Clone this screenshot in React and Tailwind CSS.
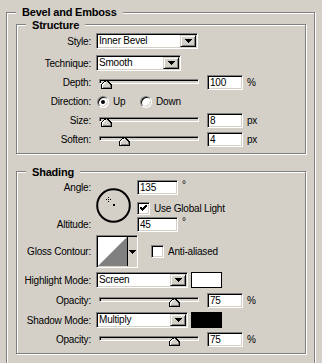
import React from 'react'

const sunken =
  'border border-t-[#808080] border-l-[#808080] border-b-white border-r-white shadow-[inset_1px_1px_0_#000,inset_-1px_-1px_0_#d4d0c8]'
const raised =
  'border border-t-[#d4d0c8] border-l-[#d4d0c8] border-b-black border-r-black shadow-[inset_1px_1px_0_#fff,inset_-1px_-1px_0_#808080] bg-[#d4d0c8]'

function Arrow() {
  return (
    <svg width="7" height="4" shapeRendering="crispEdges">
      <polygon points="0,0 7,0 3.5,4" fill="#000" />
    </svg>
  )
}

function Label({ children }) {
  return <div className="w-[74px] shrink-0 text-right pr-0">{children}</div>
}

function Select({ value, w }) {
  return (
    <div className={`${sunken} ${w} h-[16px] bg-white flex items-center p-[1px]`}>
      <span className="flex-1 pl-[1px] leading-none">{value}</span>
      <div className={`${raised} w-[16px] h-full flex items-center justify-center`}>
        <Arrow />
      </div>
    </div>
  )
}

function Field({ value, w = 'w-[36px]' }) {
  return (
    <div className={`${sunken} ${w} h-[15px] bg-white flex items-center pl-[2px] leading-none`}>
      {value}
    </div>
  )
}

function Thumb() {
  return (
    <svg width="11" height="9" shapeRendering="crispEdges">
      <polygon points="0.5,8.5 0.5,4.5 5,0.5 6,0.5 10.5,5 10.5,8.5" fill="#d4d0c8" stroke="#000" />
      <polyline points="1.5,7.5 1.5,5 5.2,1.6" fill="none" stroke="#fff" />
      <polyline points="1.5,7.5 9.5,7.5 9.5,5.4" fill="none" stroke="#808080" />
    </svg>
  )
}

function Slider({ pos }) {
  return (
    <div className="relative ml-[3px] w-[100px] h-[15px] shrink-0">
      <div className="mt-[4px] h-[5px] w-full border border-t-[#808080] border-l-[#808080] border-b-white border-r-white shadow-[inset_1px_1px_0_#000] bg-[#d4d0c8]" />
      <div className="absolute top-[5px]" style={{ left: pos }}>
        <Thumb />
      </div>
    </div>
  )
}

function SliderRow({ label, pos, value, unit, className = '' }) {
  return (
    <div className={`flex items-center h-[15px] ${className}`}>
      <Label>{label}</Label>
      <div className="ml-[5px] flex items-center">
        <Slider pos={pos} />
        <div className="ml-[8px]">
          <Field value={value} />
        </div>
        <span className="ml-[4px]">{unit}</span>
      </div>
    </div>
  )
}

function Radio({ checked }) {
  return (
    <div className="w-[12px] h-[12px] rounded-full border border-t-[#808080] border-l-[#808080] border-b-white border-r-white shadow-[inset_1px_1px_0_#000,inset_-1px_-1px_0_#d4d0c8] bg-white flex items-center justify-center">
      {checked && <div className="w-[4px] h-[4px] rounded-full bg-black" />}
    </div>
  )
}

function Checkbox({ checked }) {
  return (
    <div className={`${sunken} w-[13px] h-[13px] bg-white flex items-center justify-center shrink-0`}>
      {checked && (
        <svg width="9" height="9" shapeRendering="crispEdges">
          <polyline points="1.5,3.5 3.5,5.5 7.5,1.5" fill="none" stroke="#000" strokeWidth="2" />
        </svg>
      )}
    </div>
  )
}

function Group({ title, titleTop, className = '', children }) {
  return (
    <div className={`relative border border-[#808080] shadow-[1px_1px_0_#fff,inset_1px_1px_0_#fff] ${className}`}>
      <span className={`absolute left-[9px] ${titleTop} bg-[#d4d0c8] px-[6px] text-[11px] leading-[13px] font-bold`}>
        {title}
      </span>
      {children}
    </div>
  )
}

export default function App() {
  return (
    <div className="w-[322px] h-[363px] overflow-hidden bg-[#d4d0c8] pl-[6px] pt-[12px] text-black text-[10px] tracking-[-0.2px] font-['Liberation_Sans',Arial,sans-serif]">
      <Group title="Bevel and Emboss" titleTop="-top-[7px]" className="w-[309px]">
        {/* Structure */}
        <Group title="Structure" titleTop="-top-[6px]" className="mt-[11px] ml-[9px] mr-[8px] pt-[8px] pb-[6px]">
          <div className="flex items-center h-[16px]">
            <Label>Style:</Label>
            <div className="ml-[5px]">
              <Select value="Inner Bevel" w="w-[102px]" />
            </div>
          </div>
          <div className="flex items-center h-[16px] mt-[6px]">
            <Label>Technique:</Label>
            <div className="ml-[5px]">
              <Select value="Smooth" w="w-[85px]" />
            </div>
          </div>
          <SliderRow label="Depth:" pos={2} value="100" unit="%" className="mt-[4px]" />
          <div className="flex items-center h-[15px] mt-[4px]">
            <Label>Direction:</Label>
            <div className="ml-[6px] flex items-center">
              <div className="flex items-center w-[43px]">
                <Radio checked />
                <span className="ml-[4px]">Up</span>
              </div>
              <div className="flex items-center">
                <Radio />
                <span className="ml-[4px]">Down</span>
              </div>
            </div>
          </div>
          <SliderRow label="Size:" pos={2} value="8" unit="px" className="mt-[4px]" />
          <SliderRow label="Soften:" pos={20} value="4" unit="px" className="mt-[4px]" />
        </Group>

        {/* Shading */}
        <Group title="Shading" titleTop="-top-[6px]" className="mt-[17px] ml-[9px] mr-[8px] mb-[12px] pt-[8px] pb-[6px]">
          <div className="flex">
            <div className="w-[74px] shrink-0 flex flex-col justify-between text-right">
              <div className="h-[15px] flex items-center justify-end">Angle:</div>
              <div className="h-[15px] flex items-center justify-end">Altitude:</div>
            </div>
            <svg width="35" height="35" className="ml-[5px] mt-[8px] shrink-0" shapeRendering="crispEdges">
              <circle cx="17.5" cy="17.5" r="16.3" fill="none" stroke="#000" strokeWidth="2" shapeRendering="geometricPrecision" />
              <rect x="12" y="11" width="1" height="1" fill="#000" />
              <rect x="12" y="9" width="1" height="1" fill="#000" />
              <rect x="12" y="13" width="1" height="1" fill="#000" />
              <rect x="10" y="11" width="1" height="1" fill="#000" />
              <rect x="14" y="11" width="1" height="1" fill="#000" />
              <rect x="17" y="16" width="2" height="2" fill="#000" />
            </svg>
            <div className="ml-[6px] flex flex-col">
              <div className="flex items-center h-[15px]">
                <Field value="135" w="w-[41px]" />
                <span className="ml-[4px] self-start leading-[10px]">°</span>
              </div>
              <div className="flex items-center h-[13px] mt-[7px]">
                <Checkbox checked />
                <span className="ml-[4px]">Use Global Light</span>
              </div>
              <div className="flex items-center h-[15px] mt-[2px]">
                <Field value="45" w="w-[41px]" />
                <span className="ml-[4px] self-start leading-[10px]">°</span>
              </div>
            </div>
          </div>

          <div className="flex items-center mt-[3px]">
            <Label>Gloss Contour:</Label>
            <div className={`${sunken} ml-[5px] w-[42px] h-[33px] p-[1px] flex`}>
              <svg width="29" height="29" className="shrink-0">
                <rect width="29" height="29" fill="#fff" />
                <polygon points="0,29 29,0 29,29" fill="#808080" />
              </svg>
              <div className="flex-1 border-l border-black bg-[#d4d0c8] flex items-center justify-center">
                <Arrow />
              </div>
            </div>
            <div className="ml-[13px] flex items-center">
              <Checkbox />
              <span className="ml-[4px]">Anti-aliased</span>
            </div>
          </div>

          <div className="flex items-center h-[16px] mt-[4px]">
            <Label>Highlight Mode:</Label>
            <div className="ml-[5px] flex items-center">
              <Select value="Screen" w="w-[92px]" />
              <div className="ml-[3px] w-[31px] h-[16px] bg-white border border-black" />
            </div>
          </div>
          <SliderRow label="Opacity:" pos={70} value="75" unit="%" className="mt-[5px]" />
          <div className="flex items-center h-[16px] mt-[4px]">
            <Label>Shadow Mode:</Label>
            <div className="ml-[5px] flex items-center">
              <Select value="Multiply" w="w-[92px]" />
              <div className="ml-[3px] w-[31px] h-[16px] bg-black border border-black" />
            </div>
          </div>
          <SliderRow label="Opacity:" pos={70} value="75" unit="%" className="mt-[4px]" />
        </Group>
      </Group>
    </div>
  )
}
